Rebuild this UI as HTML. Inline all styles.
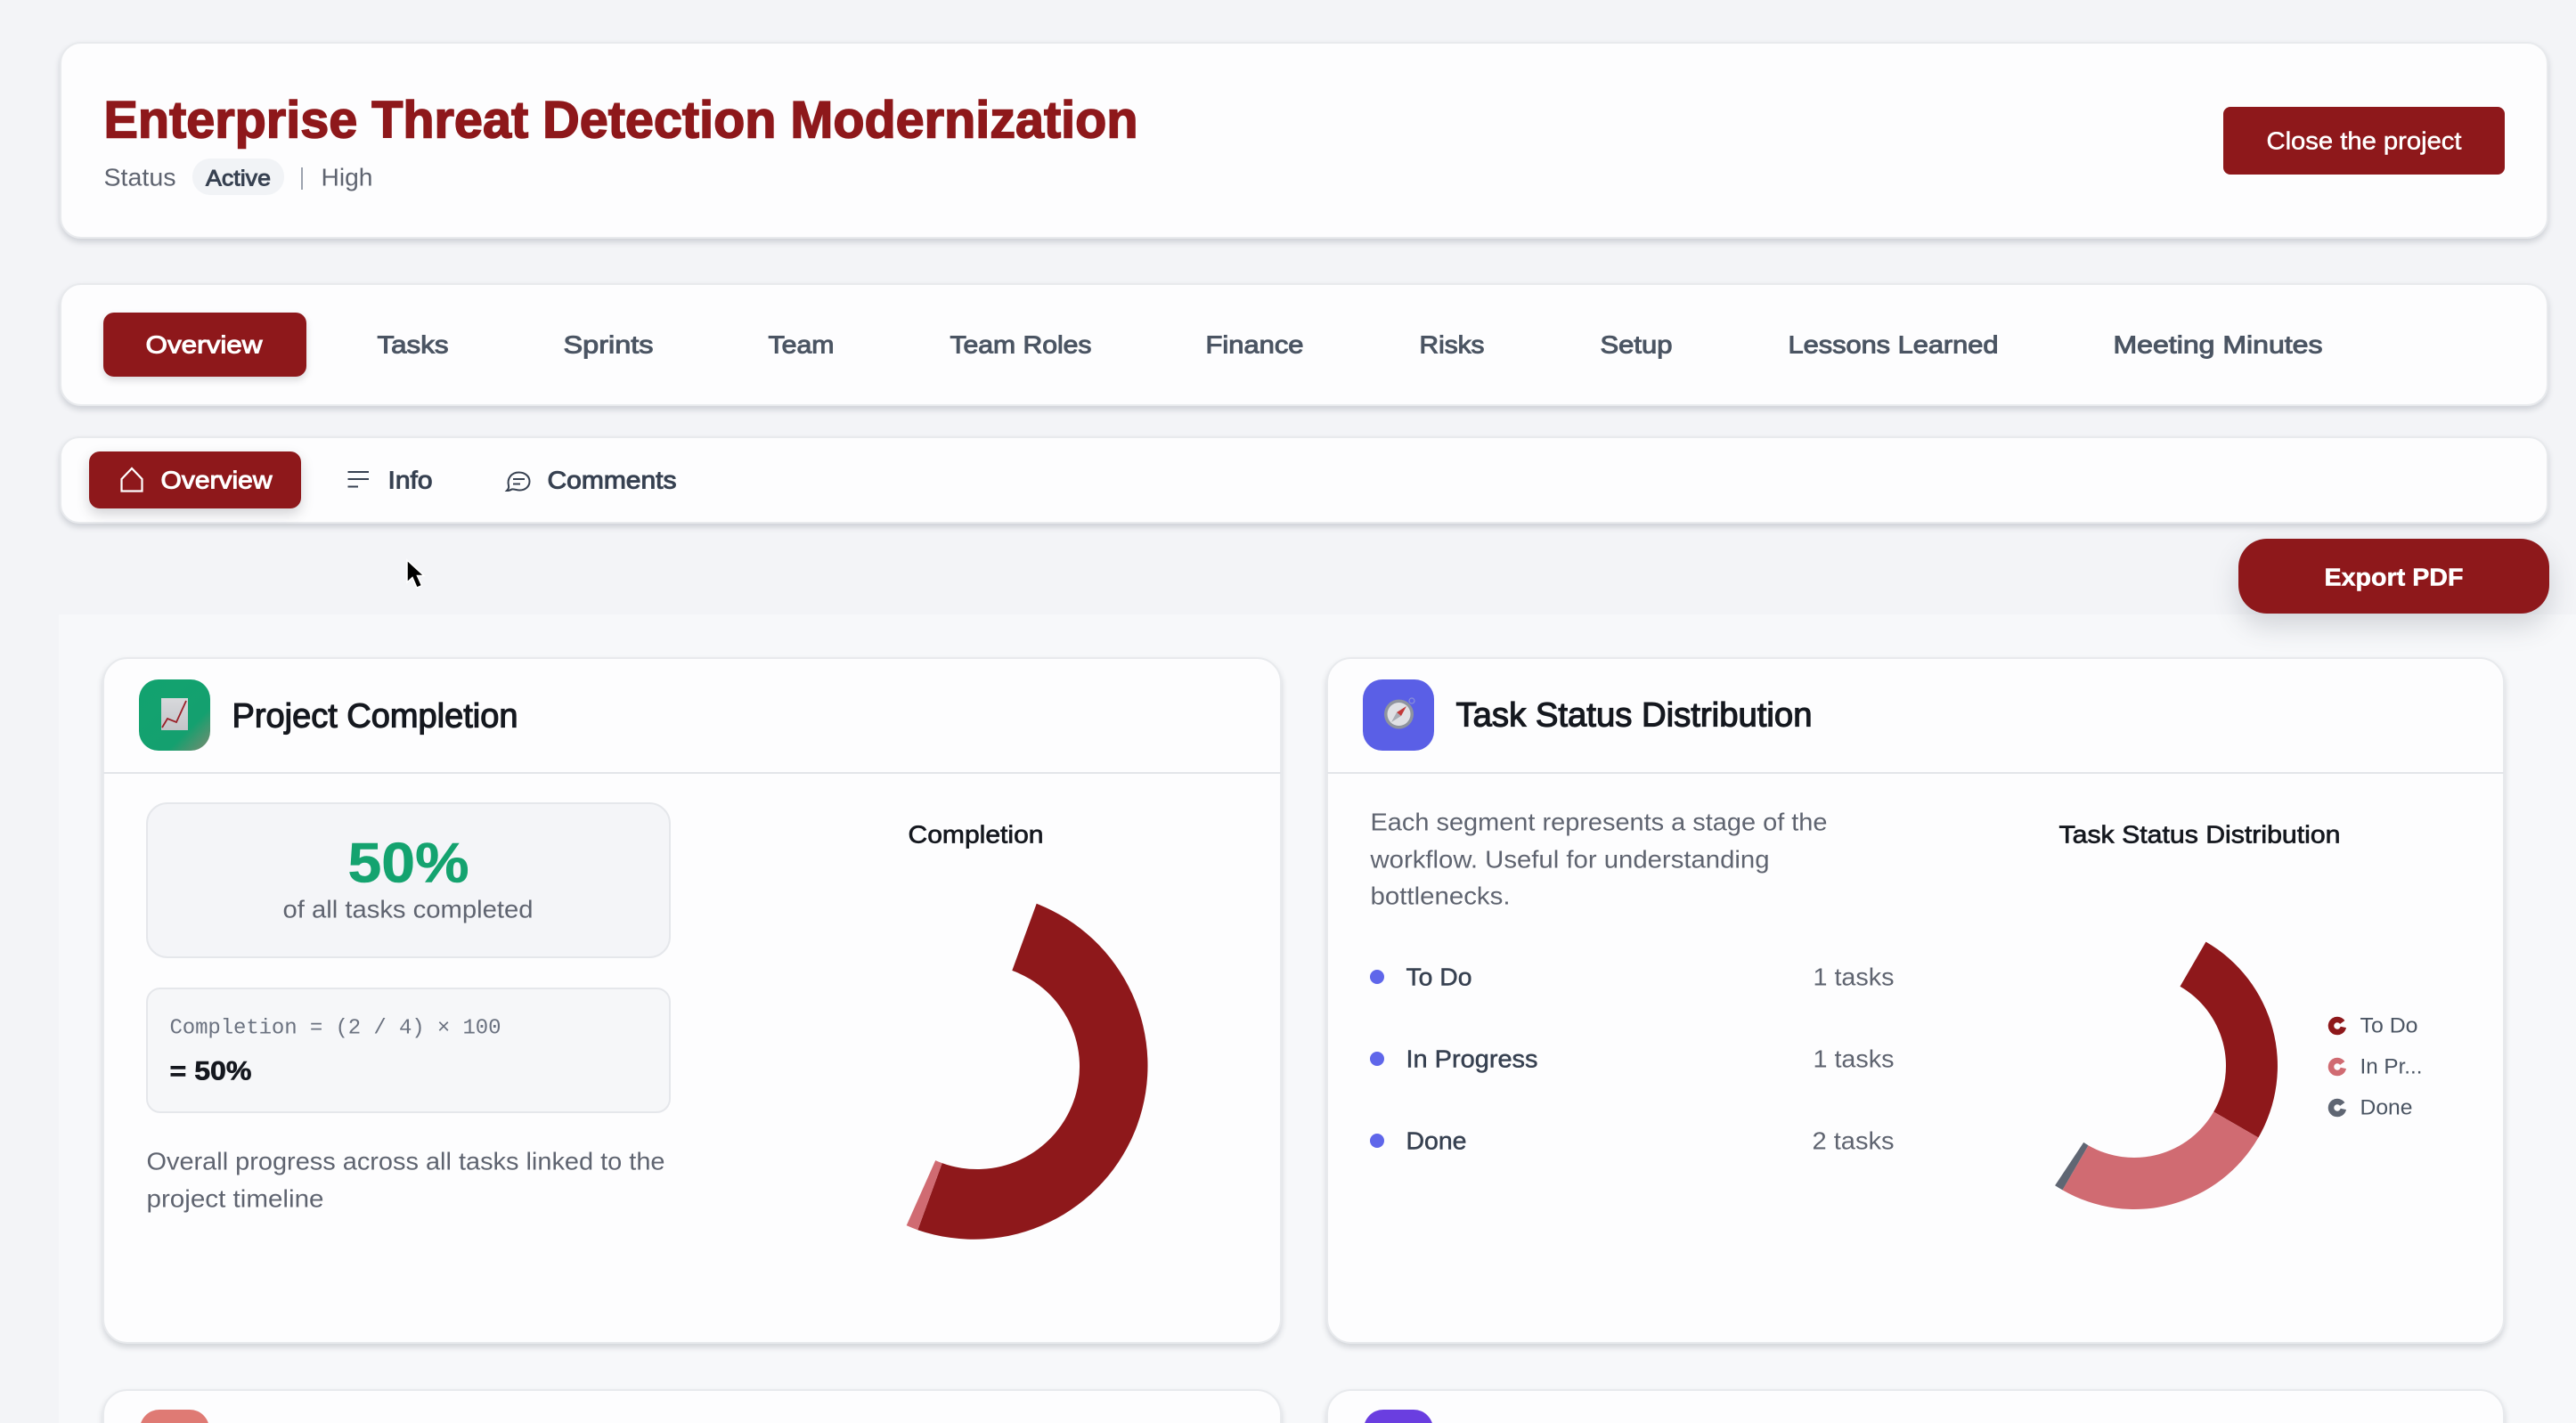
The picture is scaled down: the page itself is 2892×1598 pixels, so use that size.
<!DOCTYPE html>
<html lang="en"><head><meta charset="utf-8"><title>Enterprise Threat Detection Modernization</title>
<style>
html,body{margin:0;padding:0;width:2892px;height:1598px;overflow:hidden;background:#f3f4f7}
#page{position:relative;width:2892px;height:1598px;overflow:hidden;contain:paint}
.b{position:absolute;box-sizing:border-box}
.card{background:#fdfdfe;border:2px solid #e8eaed;box-shadow:0 4px 7px rgba(60,70,85,.2)}
svg{position:absolute;left:0;top:0;font-family:"Liberation Sans",sans-serif}
text{transform:translate(-.5px,-.7px)}
.n{font-size:28px;fill:#4b5563;stroke:#4b5563;stroke-width:1}
.s{font-size:28px;fill:#374151;stroke:#374151;stroke-width:1}
.g{font-size:28px;fill:#5f6470}
.t{font-size:38px;fill:#15181f;stroke:#15181f;stroke-width:1.200}
.c{font-size:28px;fill:#15181f;stroke:#15181f;stroke-width:.7}
.l{font-size:28px;fill:#374151;stroke:#374151;stroke-width:.5}
.w{fill:#fff;stroke:#fff}
.lg{font-size:24px;fill:#4b5563}
</style></head><body>
<div id="page">
<div class="b" style="left:66px;top:690px;width:2826px;height:908px;background:#f7f8fa"></div>
<div class="b card" style="left:67px;top:47px;width:2794px;height:221px;border-radius:24px"></div>
<div class="b" style="left:216px;top:178px;width:103px;height:41px;border-radius:20px;background:#f1f3f6"></div>
<div class="b" style="left:2496px;top:120px;width:316px;height:76px;border-radius:8px;background:#8e181b"></div>
<div class="b card" style="left:67px;top:318px;width:2794px;height:138px;border-radius:24px"></div>
<div class="b" style="left:116px;top:351px;width:228px;height:72px;border-radius:12px;background:#8e181b;box-shadow:0 4px 8px rgba(60,60,70,.18)"></div>
<div class="b card" style="left:67px;top:490px;width:2794px;height:98px;border-radius:22px"></div>
<div class="b" style="left:100px;top:507px;width:238px;height:64px;border-radius:12px;background:#8e181b;box-shadow:0 6px 14px rgba(60,60,70,.22)"></div>
<div class="b" style="left:2513px;top:605px;width:349px;height:84px;border-radius:32px;background:#8e181b;box-shadow:0 14px 30px rgba(60,70,85,.2)"></div>
<div class="b card" style="left:115px;top:738px;width:1324px;height:771px;border-radius:28px"></div>
<div class="b card" style="left:1489px;top:738px;width:1323px;height:771px;border-radius:28px"></div>
<div class="b" style="left:116px;top:867px;width:1322px;height:2px;background:#e3e5e9"></div>
<div class="b" style="left:1490px;top:867px;width:1321px;height:2px;background:#e3e5e9"></div>
<div class="b" style="left:156px;top:763px;width:80px;height:80px;border-radius:22px;background:linear-gradient(135deg,#12a36f 0%,#14a06f 70%,#7d8a70 100%)"></div>
<div class="b" style="left:1530px;top:763px;width:80px;height:80px;border-radius:22px;background:#5a5fe6"></div>
<div class="b" style="left:164px;top:901px;width:589px;height:175px;border-radius:24px;background:#f4f5f8;border:2px solid #e5e7eb"></div>
<div class="b" style="left:164px;top:1109px;width:589px;height:141px;border-radius:16px;background:#f6f7f9;border:2px solid #e5e7eb"></div>
<div class="b card" style="left:115px;top:1560px;width:1324px;height:80px;border-radius:28px"></div>
<div class="b card" style="left:1489px;top:1560px;width:1323px;height:80px;border-radius:28px"></div>
<div class="b" style="left:157px;top:1583px;width:78px;height:80px;border-radius:22px;background:#df7a74"></div>
<div class="b" style="left:1531px;top:1583px;width:78px;height:80px;border-radius:22px;background:#6a3ee0"></div>

<svg width="2892" height="1598" viewBox="0 0 2892 1598">
<!-- header -->
<text x="117" y="155" textLength="1161" lengthAdjust="spacingAndGlyphs" font-size="58" font-weight="700" fill="#8e181b" stroke="#8e181b" stroke-width="1.600">Enterprise Threat Detection Modernization</text>
<text x="117" y="209" textLength="81" lengthAdjust="spacingAndGlyphs" font-size="28" fill="#5f6470">Status</text>
<text x="231.500" y="209" textLength="73" lengthAdjust="spacingAndGlyphs" font-size="25" fill="#374151" stroke="#374151" stroke-width=".9">Active</text>
<rect x="338" y="188" width="2" height="25" fill="#9ca3af"/>
<text x="361" y="209" textLength="58" lengthAdjust="spacingAndGlyphs" font-size="28" fill="#5f6470">High</text>
<text x="2545" y="168" textLength="219" lengthAdjust="spacingAndGlyphs" font-size="28" fill="#fff" stroke="#fff" stroke-width=".5">Close the project</text>
<!-- nav -->
<text class="n w" x="164" y="397" textLength="131" lengthAdjust="spacingAndGlyphs">Overview</text>
<text class="n" x="424" y="397" textLength="80" lengthAdjust="spacingAndGlyphs">Tasks</text>
<text class="n" x="633" y="397" textLength="101" lengthAdjust="spacingAndGlyphs">Sprints</text>
<text class="n" x="863" y="397" textLength="74" lengthAdjust="spacingAndGlyphs">Team</text>
<text class="n" x="1067" y="397" textLength="159" lengthAdjust="spacingAndGlyphs">Team Roles</text>
<text class="n" x="1354" y="397" textLength="110" lengthAdjust="spacingAndGlyphs">Finance</text>
<text class="n" x="1594" y="397" textLength="73" lengthAdjust="spacingAndGlyphs">Risks</text>
<text class="n" x="1797" y="397" textLength="81" lengthAdjust="spacingAndGlyphs">Setup</text>
<text class="n" x="2008" y="397" textLength="236" lengthAdjust="spacingAndGlyphs">Lessons Learned</text>
<text class="n" x="2373" y="397" textLength="235" lengthAdjust="spacingAndGlyphs">Meeting Minutes</text>
<!-- sub nav -->
<path d="M136.500 538L148 526L159.500 538V551.500H136.500Z" fill="none" stroke="#fff" stroke-width="2.200"/>
<text class="s w" x="181" y="549" textLength="125" lengthAdjust="spacingAndGlyphs">Overview</text>
<path d="M390.500 530H414M390.500 538H414M390.500 546.500H402" fill="none" stroke="#374151" stroke-width="2"/>
<text class="s" x="436" y="549" textLength="50" lengthAdjust="spacingAndGlyphs">Info</text>
<path d="M569 551C571 549 571.500 547.500 571 545.500C569 537.500 574 530.500 582.500 530.500C589.500 530.500 594.500 535 594.500 540.500C594.500 546.500 589.500 550.500 583.500 550.500C580 550.500 577 549 574.500 549.500C573 550.500 571 551 569 551Z" fill="none" stroke="#374151" stroke-width="2"/>
<path d="M576 538H589M576 543.500H584" fill="none" stroke="#374151" stroke-width="2"/>
<text class="s" x="615" y="549" textLength="145" lengthAdjust="spacingAndGlyphs">Comments</text>
<!-- cursor -->
<path d="M457 629V654L463 648.500L468 660L473.500 657.500L468.500 646.500L476 646.500Z" fill="#000" stroke="#fff" stroke-width="1.500"/>
<text x="2610" y="658" textLength="156" lengthAdjust="spacingAndGlyphs" font-size="28" font-weight="700" fill="#fff" stroke="#fff" stroke-width=".5">Export PDF</text>
<!-- card titles -->
<text class="t" x="261" y="817" textLength="321" lengthAdjust="spacingAndGlyphs">Project Completion</text>
<text class="t" x="1635" y="816" textLength="400" lengthAdjust="spacingAndGlyphs">Task Status Distribution</text>
<!-- chart emoji -->
<defs><linearGradient id="gy" x1="0" y1="0" x2="0" y2="1"><stop offset="0" stop-color="#d8d9dc"/><stop offset="1" stop-color="#c3c4c8"/></linearGradient></defs>
<rect x="181" y="784" width="30" height="36" fill="url(#gy)"/>
<path d="M182 817L188 807L198 811L209 787" fill="none" stroke="#9a2028" stroke-width="1.800"/>
<!-- compass emoji -->
<circle cx="1570.500" cy="802" r="16.500" fill="#8f949e"/>
<circle cx="1570.500" cy="802" r="13" fill="#e0e1e5"/>
<circle cx="1585" cy="787" r="3" fill="none" stroke="#8a90d8" stroke-width="1.200"/>
<path d="M1579 793L1573 804L1568 800Z" fill="#c23a3a"/>
<path d="M1562 811L1573 804L1568 800Z" fill="#a9adb5"/>
<!-- stat box -->
<text x="391" y="991" textLength="136" lengthAdjust="spacingAndGlyphs" font-size="63" font-weight="700" fill="#14a36f" stroke="#14a36f" stroke-width=".6">50%</text>
<text class="g" x="318" y="1031" textLength="281" lengthAdjust="spacingAndGlyphs">of all tasks completed</text>
<text x="191" y="1161" textLength="372" font-size="24" font-family="Liberation Mono,monospace" fill="#6b7280">Completion = (2 / 4) × 100</text>
<text x="191" y="1213" textLength="92" lengthAdjust="spacingAndGlyphs" font-size="30" font-weight="700" fill="#15181f" stroke="#15181f" stroke-width=".6">= 50%</text>
<text class="g" x="165" y="1314" textLength="582" lengthAdjust="spacingAndGlyphs">Overall progress across all tasks linked to the</text>
<text class="g" x="165" y="1356" textLength="199" lengthAdjust="spacingAndGlyphs">project timeline</text>
<!-- donut 1 -->
<text class="c" x="1020" y="947" textLength="152" lengthAdjust="spacingAndGlyphs">Completion</text>
<path d="M1163.700 1014.800A195 195 0 0 1 1030.300 1381.200L1057.700 1306.100A115 115 0 0 0 1136.300 1089.900Z" fill="#8e181b"/>
<path d="M1030.300 1381.200A195 195 0 0 1 1017.700 1376.100L1050.200 1303.100A115 115 0 0 0 1057.700 1306.100Z" fill="#d06b72"/>
<!-- right card left col -->
<text class="g" x="1539" y="933" textLength="513" lengthAdjust="spacingAndGlyphs">Each segment represents a stage of the</text>
<text class="g" x="1539" y="975" textLength="448" lengthAdjust="spacingAndGlyphs">workflow. Useful for understanding</text>
<text class="g" x="1539" y="1016" textLength="157" lengthAdjust="spacingAndGlyphs">bottlenecks.</text>
<circle cx="1546" cy="1097" r="8" fill="#5f66ea"/>
<circle cx="1546" cy="1189" r="8" fill="#5f66ea"/>
<circle cx="1546" cy="1281" r="8" fill="#5f66ea"/>
<text class="l" x="1579" y="1107" textLength="74" lengthAdjust="spacingAndGlyphs">To Do</text>
<text class="l" x="1579" y="1199" textLength="148" lengthAdjust="spacingAndGlyphs">In Progress</text>
<text class="l" x="1579" y="1291" textLength="68" lengthAdjust="spacingAndGlyphs">Done</text>
<text class="g" x="2036" y="1107" textLength="91" lengthAdjust="spacingAndGlyphs">1 tasks</text>
<text class="g" x="2036" y="1199" textLength="91" lengthAdjust="spacingAndGlyphs">1 tasks</text>
<text class="g" x="2035" y="1291" textLength="92" lengthAdjust="spacingAndGlyphs">2 tasks</text>
<!-- donut 2 -->
<text class="c" x="2312" y="947" textLength="316" lengthAdjust="spacingAndGlyphs">Task Status Distribution</text>
<path d="M2476.500 1057.600A161 161 0 0 1 2535.400 1277.500L2485.200 1248.500A103 103 0 0 0 2447.500 1107.800Z" fill="#8e181b"/>
<path d="M2535.400 1277.500A161 161 0 0 1 2315.500 1336.400L2344.500 1286.200A103 103 0 0 0 2485.200 1248.500Z" fill="#d06b72"/>
<path d="M2315.500 1336.400A161 161 0 0 1 2307.100 1331.300L2339.200 1282.900A103 103 0 0 0 2344.500 1286.200Z" fill="#5f6673"/>
<g fill="none" stroke-width="6.500" stroke-dasharray="38 6">
<circle cx="2624" cy="1152" r="7" stroke="#8e181b" transform="rotate(12 2624 1152)"/>
<circle cx="2624" cy="1198" r="7" stroke="#d06b72" transform="rotate(12 2624 1198)"/>
<circle cx="2624" cy="1244" r="7" stroke="#5f6673" transform="rotate(12 2624 1244)"/>
</g>
<text class="lg" x="2650" y="1160" textLength="65" lengthAdjust="spacingAndGlyphs">To Do</text>
<text class="lg" x="2650" y="1206" textLength="70" lengthAdjust="spacingAndGlyphs">In Pr...</text>
<text class="lg" x="2650" y="1252" textLength="59" lengthAdjust="spacingAndGlyphs">Done</text>
</svg>
</div>
</body></html>
